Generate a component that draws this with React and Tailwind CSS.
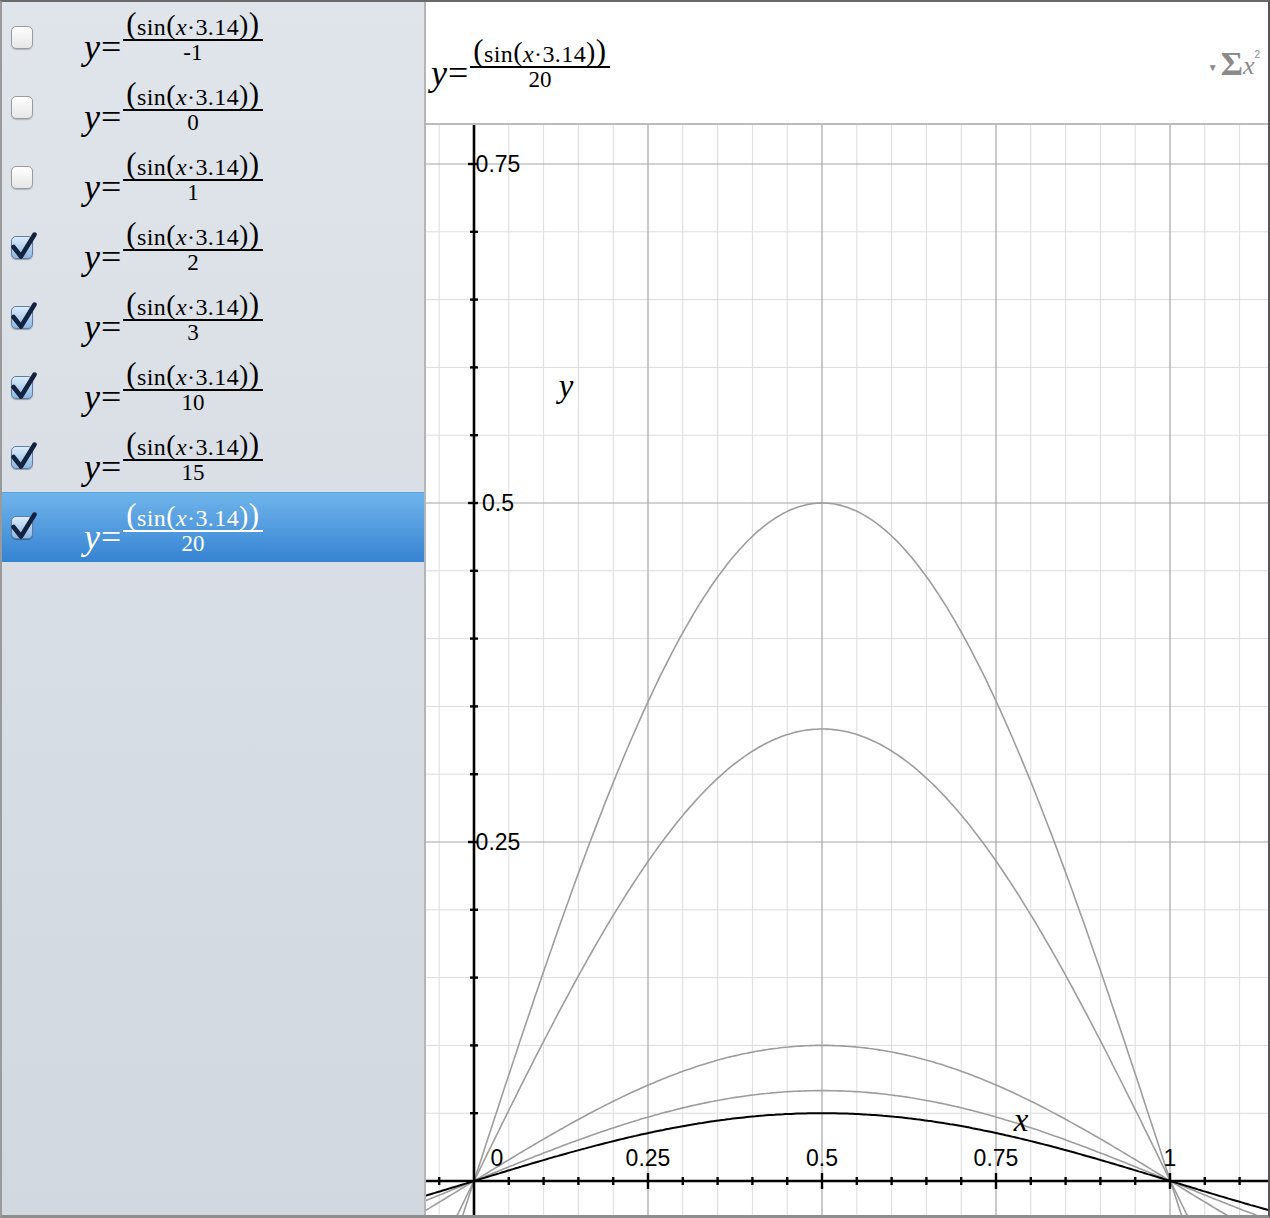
import React from "react";

// graph scale: x=0 -> 48px, 1 unit -> 696px ; y=0 -> 1056px, 1 unit -> 1356px
const OX = 48;
const OY = 1056;
const SX = 696;
const SY = 1356;
const W = 842;
const H = 1090;

const ROWS = [
  { den: "-1", checked: false },
  { den: "0", checked: false },
  { den: "1", checked: false },
  { den: "2", checked: true },
  { den: "3", checked: true },
  { den: "10", checked: true },
  { den: "15", checked: true },
  { den: "20", checked: true, selected: true },
];

const curve = (n) => {
  const pts = [];
  for (let x = -0.1; x <= 1.25; x += 0.004) {
    const px = OX + SX * x;
    const py = OY - (SY * Math.sin(x * 3.14)) / n;
    pts.push(`${px.toFixed(1)},${py.toFixed(1)}`);
  }
  return "M" + pts.join(" L");
};

const Checkbox = ({ checked }) => (
  <div className="relative w-[22px] h-[23px] shrink-0">
    <div
      className={
        checked
          ? "w-full h-full rounded-[5px] border border-[#5f7ea3] bg-linear-to-b from-[#dcebf9] to-[#8cb8e4] shadow-[0_1px_1px_rgba(0,0,0,0.3)]"
          : "w-full h-full rounded-[5px] border border-[#9c9c9c] bg-linear-to-b from-[#ffffff] to-[#e6e6e6] shadow-[0_1px_1px_rgba(0,0,0,0.2)]"
      }
    />
    {checked && (
      <svg className="absolute left-0 -top-[4px]" width="26" height="28" viewBox="0 0 26 28">
        <path d="M2.5 15 L10 24.5 L23.5 2.5" fill="none" stroke="#12223f" strokeWidth="4.5" strokeLinecap="round" strokeLinejoin="round" />
      </svg>
    )}
  </div>
);

const Formula = ({ den, white }) => {
  const line = white ? "border-white" : "border-black";
  return (
    <div className={`flex items-center font-['Liberation_Serif',serif] ${white ? "text-white" : "text-black"}`}>
      <div className="flex items-center leading-none mt-[19px]">
        <span className="italic text-[36px]">y</span>
        <span className="text-[36px] ml-[1px]">=</span>
      </div>
      <div className="flex flex-col items-stretch ml-[2px]">
        <div className={`flex items-end justify-center h-[30px] px-[3px] border-b-2 ${line} leading-none text-[24px] tracking-[0.4px]`}>
          <span className="text-[31px]">(</span>
          <span>sin</span>
          <span className="text-[28px]">(</span>
          <span className="italic">x</span>
          <span>·</span>
          <span>3.14</span>
          <span className="text-[28px]">)</span>
          <span className="text-[31px]">)</span>
        </div>
        <div className="text-center h-[22px] leading-[24px] text-[23px]">{den}</div>
      </div>
    </div>
  );
};

const Graph = () => {
  const vMinor = [];
  const vMajor = [];
  for (let k = -1; k <= 22; k++) {
    if (k === 0) continue;
    const px = OX + SX * 0.05 * k;
    (k % 5 === 0 ? vMajor : vMinor).push(px);
  }
  const hMinor = [];
  const hMajor = [];
  for (let k = 1; k <= 15; k++) {
    const py = OY - SY * 0.05 * k;
    (k % 5 === 0 ? hMajor : hMinor).push(py);
  }
  const xTicks = [];
  for (let k = -1; k <= 22; k++) {
    if (k === 0) continue;
    xTicks.push({ px: OX + SX * 0.05 * k, major: k % 5 === 0 });
  }
  const yTicks = [];
  for (let k = 1; k <= 15; k++) yTicks.push({ py: OY - SY * 0.05 * k, major: k % 5 === 0 });

  return (
    <svg width={W} height={H} viewBox={`0 0 ${W} ${H}`} className="block">
      {vMinor.map((x) => (
        <line key={"vm" + x} x1={x} y1="0" x2={x} y2={H} stroke="#dddddd" strokeWidth="1" />
      ))}
      {hMinor.map((y) => (
        <line key={"hm" + y} x1="0" y1={y} x2={W} y2={y} stroke="#dddddd" strokeWidth="1" />
      ))}
      {vMajor.map((x) => (
        <line key={"vM" + x} x1={x} y1="0" x2={x} y2={H} stroke="#a5a5a5" strokeWidth="1.2" />
      ))}
      {hMajor.map((y) => (
        <line key={"hM" + y} x1="0" y1={y} x2={W} y2={y} stroke="#a5a5a5" strokeWidth="1.2" />
      ))}

      {[2, 3, 10, 15].map((n) => (
        <path key={n} d={curve(n)} fill="none" stroke="#9d9d9d" strokeWidth="1.6" />
      ))}
      <path d={curve(20)} fill="none" stroke="#000" strokeWidth="2" />

      <line x1="0" y1={OY} x2={W} y2={OY} stroke="#000" strokeWidth="2.6" />
      <line x1={OX} y1="0" x2={OX} y2={H} stroke="#000" strokeWidth="2.6" />
      {xTicks.map((t) => (
        <line key={"xt" + t.px} x1={t.px} y1={OY - (t.major ? 8 : 4)} x2={t.px} y2={OY + (t.major ? 8 : 4)} stroke="#000" strokeWidth="2.4" />
      ))}
      {yTicks.map((t) => (
        <line key={"yt" + t.py} x1={OX - (t.major ? 6 : 4)} y1={t.py} x2={OX + 4} y2={t.py} stroke="#000" strokeWidth="2.4" />
      ))}

      <g fontFamily="'Liberation Sans', Arial, sans-serif" fontSize="23" fill="#000" textAnchor="middle">
        <text x="72" y={OY - SY * 0.75 + 8}>0.75</text>
        <text x="72" y={OY - SY * 0.5 + 8}>0.5</text>
        <text x="72" y={OY - SY * 0.25 + 8}>0.25</text>
        <text x="71" y={OY - 15}>0</text>
        <text x={OX + SX * 0.25} y={OY - 15}>0.25</text>
        <text x={OX + SX * 0.5} y={OY - 15}>0.5</text>
        <text x={OX + SX * 0.75} y={OY - 15}>0.75</text>
        <text x={OX + SX} y={OY - 15}>1</text>
      </g>
      <g fontFamily="'Liberation Serif', 'Times New Roman', serif" fontStyle="italic" fontSize="33" fill="#000" textAnchor="middle">
        <text x="140" y="272">y</text>
        <text x="595" y="1006">x</text>
      </g>
    </svg>
  );
};

export default function App() {
  return (
    <div className="w-[1270px] h-[1218px] flex border-t-2 border-t-[#6a6a6a] border-l-2 border-l-[#9a9a9a] border-r-2 border-r-[#555555] border-b-[3px] border-b-[#8d8d8d] overflow-hidden">
      {/* list of equations */}
      <div className="w-[424px] shrink-0 h-full bg-linear-to-b from-[#e0e4eb] to-[#d1d8e0] border-r-2 border-[#b5b5b5]">
        {ROWS.map((r, i) => (
          <div
            key={i}
            className={`h-[70px] flex items-center ${
              r.selected ? "bg-linear-to-b from-[#6fb4eb] to-[#3583d2] border-t border-[#5aa3e2]" : ""
            }`}
          >
            <div className="ml-[9px]">
              <Checkbox checked={r.checked} />
            </div>
            <div className="ml-[51px]">
              <Formula den={r.den} white={r.selected} />
            </div>
          </div>
        ))}
      </div>

      {/* graph panel */}
      <div className="flex-1 flex flex-col bg-white">
        <div className="h-[123px] shrink-0 border-b-2 border-[#bcbcbc] flex items-center justify-between pl-[5px] pr-[8px]">
          <div className="mt-[2px]">
            <Formula den="20" />
          </div>
          <div className="flex items-start text-[#8a8a8a] mt-[2px]">
            <span className="text-[10px] mt-[13px] mr-[3px]">▼</span>
            <span className="font-['Liberation_Serif',serif] font-bold text-[34px] leading-none">Σ</span>
            <span className="font-['Liberation_Serif',serif] italic text-[26px] leading-none mt-[6px]">x</span>
            <span className="font-['Liberation_Sans',sans-serif] text-[10px] leading-none mt-[3px]">2</span>
          </div>
        </div>
        <div className="flex-1 overflow-hidden">
          <Graph />
        </div>
      </div>
    </div>
  );
}
